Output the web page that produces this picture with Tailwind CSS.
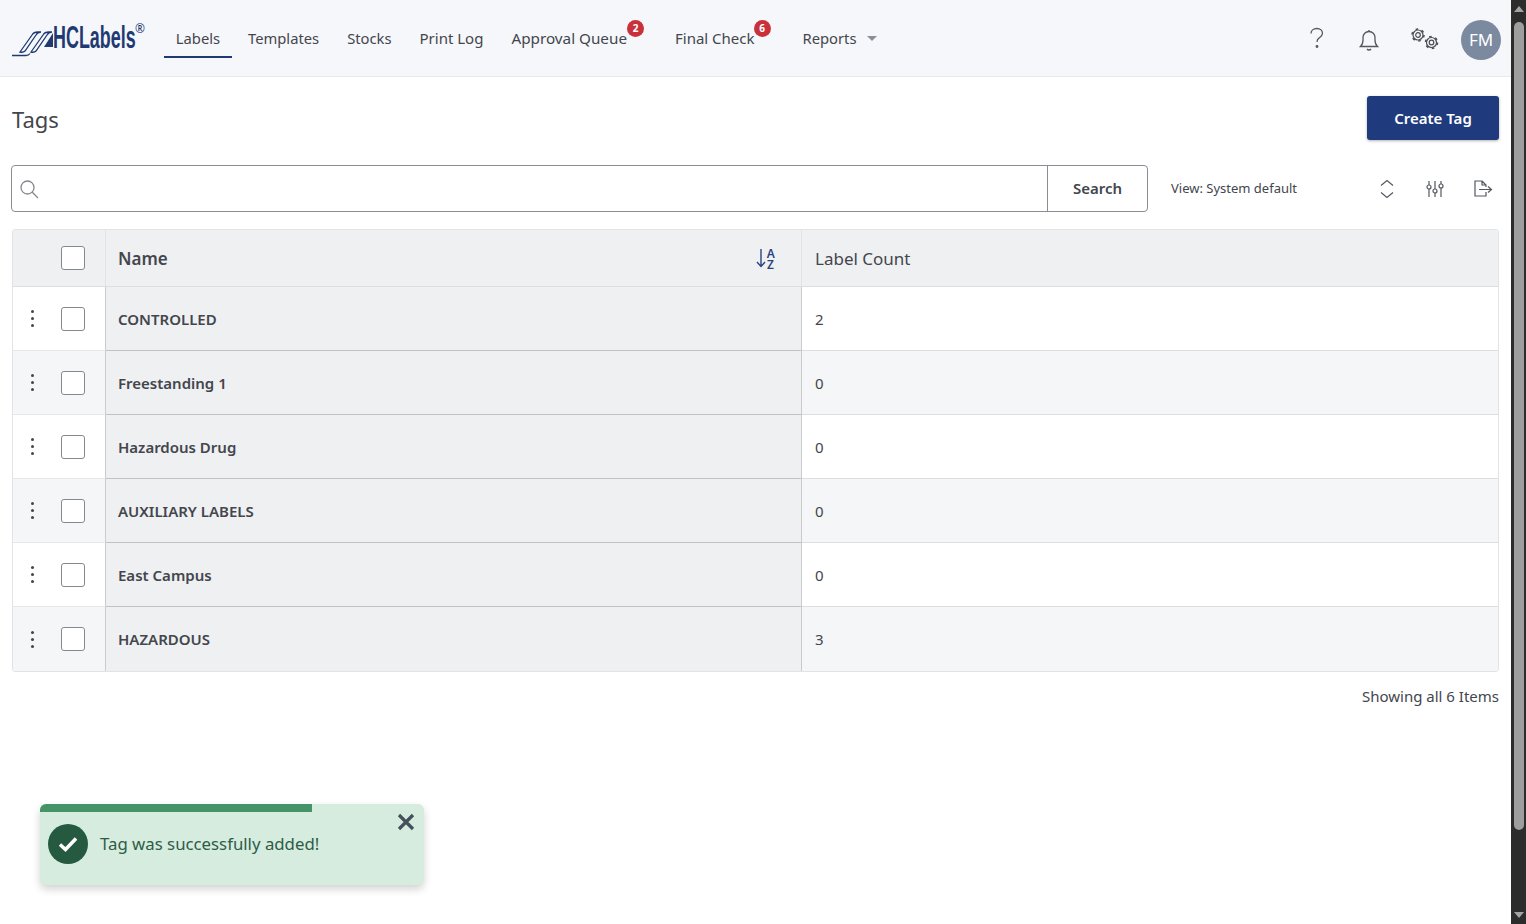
<!DOCTYPE html>
<html lang="en">
<head>
  <meta charset="UTF-8" />
  <meta name="viewport" content="width=device-width, initial-scale=1" />
  <title>Tags</title>
  <script src="https://cdn.jsdelivr.net/npm/@tailwindcss/browser@4"></script>
</head>
<body class="bg-white font-['Noto_Sans',sans-serif] text-[#43464d] h-screen overflow-hidden flex">
  <div class="flex-1 min-w-0 relative">
    <!-- top nav -->
    <header class="h-[77px] bg-[#f6f7fa] border-b border-[#e8e9ec] flex items-center pl-3 pr-[10px]">
      <a class="w-[152px] h-[40px] flex items-center shrink-0 text-[#1f3a73]">
        <svg width="41" height="28" viewBox="0 0 41 28" fill="none" stroke="#1f3a73" stroke-width="1.300" class="shrink-0 mt-[9px]">
          <path d="M0 26.500H14c2 0 3-.5 4-2" />
          <path d="M8 23 20 6c1-2 3-3 6-3h3c-2 0-4 1-5 3L13 22c-1 1-3 1.500-5 1z" />
          <path d="M19 23 31 6c1-2 3-3 6-3h3c-2 0-4 1-5 3L24 22c-1 1-3 1.500-5 1z" />
          <path d="M32 18 41 4v14z" fill="#1f3a73" stroke="none" />
        </svg>
        <span class="font-['Liberation_Sans',sans-serif] font-bold text-[32px] leading-none scale-x-[0.56] origin-left whitespace-nowrap w-[82px] inline-block mt-[-3px]">HCLabels</span>
        <span class="text-[12px] leading-none -mt-[19px] ml-0">®</span>
      </a>
      <nav class="flex items-center h-full text-[14.75px]">
        <a class="h-[40px] pt-[2px] w-[68px] flex items-center justify-center border-b-2 border-[#1f3a73]">Labels</a>
        <a class="ml-4">Templates</a>
        <a class="ml-7">Stocks</a>
        <a class="ml-7 text-[15px]">Print Log</a>
        <a class="ml-7 relative text-[15.25px]">Approval Queue
          <span class="absolute -right-[17px] -top-[7px] w-[17px] h-[17px] rounded-full bg-[#c8313a] text-white text-[10px] font-bold flex items-center justify-center">2</span>
        </a>
        <a class="ml-12 relative text-[15px]">Final Check
          <span class="absolute -right-[16px] -top-[7px] w-[17px] h-[17px] rounded-full bg-[#c8313a] text-white text-[10px] font-bold flex items-center justify-center">6</span>
        </a>
        <a class="ml-12 flex items-center">Reports
          <span class="ml-[10px] w-0 h-0 border-x-[5px] border-x-transparent border-t-[5px] border-t-[#8b8f96]"></span>
        </a>
      </nav>
      <div class="ml-auto flex items-center">
        <svg width="20" height="24" viewBox="0 0 20 24" fill="none" stroke="#55585f" stroke-width="1.300" class="mr-[32px] mb-[1px]">
          <path d="M4 7.500C4 4.500 6.500 2.500 9.800 2.500 13 2.500 15.500 4.500 15.500 7.300c0 2.400-1.600 3.400-3.300 4.600-1.500 1-2.200 2-2.200 4.100" />
          <circle cx="10" cy="20.500" r=".8" fill="#55585f" />
        </svg>
        <svg width="20" height="22" viewBox="0 0 20 22" fill="none" stroke="#55585f" stroke-width="1.300" class="mr-[32px] mt-[4px]">
          <path d="M1.500 17.500c1.800-1.600 2.500-3.500 2.500-6.500V8.500C4 5 6.600 2.500 10 2.500s6 2.500 6 6V11c0 3 .7 4.900 2.500 6.500z" />
          <path d="M10 1v1.500M8 20c.5.700 1.200 1 2 1s1.500-.3 2-1" />
        </svg>
        <svg width="28" height="22" viewBox="0 0 28 22" fill="none" stroke="#4a4d54" class="mr-[22px] mt-[1px]">
          <g stroke-width="1.200">
            <circle cx="7" cy="7" r="5" />
            <circle cx="7" cy="7" r="2.300" />
            <circle cx="20.500" cy="14.500" r="5" />
            <circle cx="20.500" cy="14.500" r="2.300" />
          </g>
          <g stroke-width="1.500" stroke-dasharray="2.600 3.680">
            <circle cx="7" cy="7" r="6" />
            <circle cx="20.500" cy="14.500" r="6" />
          </g>
        </svg>
        <div class="w-10 h-10 mt-1 rounded-full bg-[#7c8aa0] text-white text-[17px] flex items-center justify-center">FM</div>
      </div>
    </header>

    <main class="pl-3 pr-3">
      <div class="flex items-start justify-between pt-[19px] h-[88px]">
        <h1 class="text-[22px] leading-none mt-[12px]">Tags</h1>
        <button class="w-[132px] h-[44px] rounded-[3px] bg-[#1f3a7d] text-white text-[15px] font-semibold shadow-[0_1px_3px_rgba(0,0,0,0.3)]">Create Tag</button>
      </div>

      <div class="flex items-center h-[47px]">
        <div class="w-[1137px] h-[47px] -ml-[1px] flex items-center border border-[#8a8d93] rounded-[4px] bg-white">
          <svg width="20" height="20" viewBox="0 0 20 20" fill="none" stroke="#85888e" stroke-width="1.300" class="ml-[7px] shrink-0">
            <circle cx="8.500" cy="8.500" r="6.500" />
            <path d="M13.300 13.300 19 19" />
          </svg>
          <div class="ml-auto w-[100px] h-full border-l border-[#8a8d93] flex items-center justify-center text-[15px] font-semibold">Search</div>
        </div>
        <span class="ml-[23px] pt-[1px] text-[13px] w-[200px]">View: System default</span>
        <svg width="14" height="20" viewBox="0 0 14 20" fill="none" stroke="#55585f" stroke-width="1.200" class="ml-[9px]">
          <path d="M1 6.500l6-5 6 5M1 13.500l6 5 6-5" />
        </svg>
        <svg width="18" height="18" viewBox="0 0 18 18" fill="none" stroke="#55585f" stroke-width="1.200" class="ml-[32px]">
          <path d="M3 1v4M3 9v8M9 1v8M9 13v4M15 1v3M15 8v9" />
          <circle cx="3" cy="7" r="2" />
          <circle cx="9" cy="11" r="2" />
          <circle cx="15" cy="6" r="2" />
        </svg>
        <svg width="20" height="18" viewBox="0 0 20 18" fill="none" stroke="#55585f" stroke-width="1.200" class="ml-[29px]">
          <path d="M9 1H2v15h11v-4M9 1l4 4v2M9 1v4h4" />
          <path d="M6 9.500h12.500M15 6.500l3.500 3-3.500 3" />
        </svg>
      </div>

      <!-- tags table -->
      <div class="mt-[17px] border border-[#e1e3e6] rounded-[3px] w-[1487px] overflow-hidden text-[15px]">
        <div class="flex h-[57px] bg-[#eff0f2] border-b border-[#dcdee1]">
          <div class="w-[93px] shrink-0 border-r border-[#e1e3e6] flex items-center pl-[48px]">
            <span class="w-6 h-6 rounded-[3px] border border-[#85888e] bg-white"></span>
          </div>
          <div class="w-[696px] shrink-0 border-r border-[#e1e3e6] flex items-center justify-between pl-3 pr-[25px]">
            <span class="text-[17px] font-semibold pt-[1px]">Name</span>
            <span class="flex items-center text-[#2b4480]">
              <svg width="10" height="20" viewBox="0 0 10 20" fill="none" stroke="#2b4480" stroke-width="1.400">
                <path d="M5 1v17M1 14l4 4.500L9 14" />
              </svg>
              <span class="text-[12px] leading-none font-semibold -ml-[2px] [writing-mode:vertical-rl] [text-orientation:upright] tracking-[-6.500px] h-[18px] -translate-y-[4px]">AZ</span>
            </span>
          </div>
          <div class="pl-[13px] pt-[1px] flex items-center text-[17px]">Label Count</div>
        </div>

        <div class="flex h-[64px] bg-white">
          <div class="w-[93px] shrink-0 border-r border-r-[#c9cbce] border-b border-b-[#e6e7ea] flex items-center pl-[18px]">
            <span class="flex flex-col gap-[4px] w-[3px]"><i class="w-[3px] h-[3px] rounded-full bg-[#43464d]"></i><i class="w-[3px] h-[3px] rounded-full bg-[#43464d]"></i><i class="w-[3px] h-[3px] rounded-full bg-[#43464d]"></i></span>
            <span class="ml-[27px] w-6 h-6 rounded-[3px] border border-[#85888e] bg-white"></span>
          </div>
          <div class="w-[696px] shrink-0 bg-[#eff0f2] border-r border-r-[#c9cbce] border-b border-b-[#bfc1c4] flex items-center pl-3 pt-[1px] font-semibold">CONTROLLED</div>
          <div class="flex-1 border-b border-[#dcdee1] pl-[13px] pt-[1px] flex items-center">2</div>
        </div>
        <div class="flex h-[64px] bg-[#f5f6f8]">
          <div class="w-[93px] shrink-0 border-r border-r-[#c9cbce] border-b border-b-[#e6e7ea] flex items-center pl-[18px]">
            <span class="flex flex-col gap-[4px] w-[3px]"><i class="w-[3px] h-[3px] rounded-full bg-[#43464d]"></i><i class="w-[3px] h-[3px] rounded-full bg-[#43464d]"></i><i class="w-[3px] h-[3px] rounded-full bg-[#43464d]"></i></span>
            <span class="ml-[27px] w-6 h-6 rounded-[3px] border border-[#85888e] bg-white"></span>
          </div>
          <div class="w-[696px] shrink-0 bg-[#eff0f2] border-r border-r-[#c9cbce] border-b border-b-[#bfc1c4] flex items-center pl-3 pt-[1px] font-semibold">Freestanding 1</div>
          <div class="flex-1 border-b border-[#dcdee1] pl-[13px] pt-[1px] flex items-center">0</div>
        </div>
        <div class="flex h-[64px] bg-white">
          <div class="w-[93px] shrink-0 border-r border-r-[#c9cbce] border-b border-b-[#e6e7ea] flex items-center pl-[18px]">
            <span class="flex flex-col gap-[4px] w-[3px]"><i class="w-[3px] h-[3px] rounded-full bg-[#43464d]"></i><i class="w-[3px] h-[3px] rounded-full bg-[#43464d]"></i><i class="w-[3px] h-[3px] rounded-full bg-[#43464d]"></i></span>
            <span class="ml-[27px] w-6 h-6 rounded-[3px] border border-[#85888e] bg-white"></span>
          </div>
          <div class="w-[696px] shrink-0 bg-[#eff0f2] border-r border-r-[#c9cbce] border-b border-b-[#bfc1c4] flex items-center pl-3 pt-[1px] font-semibold">Hazardous Drug</div>
          <div class="flex-1 border-b border-[#dcdee1] pl-[13px] pt-[1px] flex items-center">0</div>
        </div>
        <div class="flex h-[64px] bg-[#f5f6f8]">
          <div class="w-[93px] shrink-0 border-r border-r-[#c9cbce] border-b border-b-[#e6e7ea] flex items-center pl-[18px]">
            <span class="flex flex-col gap-[4px] w-[3px]"><i class="w-[3px] h-[3px] rounded-full bg-[#43464d]"></i><i class="w-[3px] h-[3px] rounded-full bg-[#43464d]"></i><i class="w-[3px] h-[3px] rounded-full bg-[#43464d]"></i></span>
            <span class="ml-[27px] w-6 h-6 rounded-[3px] border border-[#85888e] bg-white"></span>
          </div>
          <div class="w-[696px] shrink-0 bg-[#eff0f2] border-r border-r-[#c9cbce] border-b border-b-[#bfc1c4] flex items-center pl-3 pt-[1px] font-semibold">AUXILIARY LABELS</div>
          <div class="flex-1 border-b border-[#dcdee1] pl-[13px] pt-[1px] flex items-center">0</div>
        </div>
        <div class="flex h-[64px] bg-white">
          <div class="w-[93px] shrink-0 border-r border-r-[#c9cbce] border-b border-b-[#e6e7ea] flex items-center pl-[18px]">
            <span class="flex flex-col gap-[4px] w-[3px]"><i class="w-[3px] h-[3px] rounded-full bg-[#43464d]"></i><i class="w-[3px] h-[3px] rounded-full bg-[#43464d]"></i><i class="w-[3px] h-[3px] rounded-full bg-[#43464d]"></i></span>
            <span class="ml-[27px] w-6 h-6 rounded-[3px] border border-[#85888e] bg-white"></span>
          </div>
          <div class="w-[696px] shrink-0 bg-[#eff0f2] border-r border-r-[#c9cbce] border-b border-b-[#bfc1c4] flex items-center pl-3 pt-[1px] font-semibold">East Campus</div>
          <div class="flex-1 border-b border-[#dcdee1] pl-[13px] pt-[1px] flex items-center">0</div>
        </div>
        <div class="flex h-[64px] bg-[#f5f6f8]">
          <div class="w-[93px] shrink-0 border-r border-r-[#c9cbce] flex items-center pl-[18px]">
            <span class="flex flex-col gap-[4px] w-[3px]"><i class="w-[3px] h-[3px] rounded-full bg-[#43464d]"></i><i class="w-[3px] h-[3px] rounded-full bg-[#43464d]"></i><i class="w-[3px] h-[3px] rounded-full bg-[#43464d]"></i></span>
            <span class="ml-[27px] w-6 h-6 rounded-[3px] border border-[#85888e] bg-white"></span>
          </div>
          <div class="w-[696px] shrink-0 bg-[#eff0f2] border-r border-r-[#c9cbce] flex items-center pl-3 font-semibold">HAZARDOUS</div>
          <div class="flex-1 pl-[13px] flex items-center">3</div>
        </div>
      </div>

      <p class="text-right text-[15px] mt-[13px]">Showing all 6 Items</p>
    </main>

    <!-- toast -->
    <div class="absolute left-10 top-[804px] w-[384px] h-[81px] rounded-[6px] bg-[#d6ecdf] shadow-[0_4px_8px_rgba(0,0,0,0.18)] overflow-hidden text-[#2d5c46]">
      <div class="h-2 w-[272px] bg-[#459467]"></div>
      <div class="flex items-center pl-2 mt-[12px]">
        <span class="w-10 h-10 rounded-full bg-[#255a41] flex items-center justify-center">
          <svg width="20" height="16" viewBox="0 0 20 16" fill="none" stroke="#fff" stroke-width="3.500">
            <path d="M2 8.500l5.500 5L18 2.500" />
          </svg>
        </span>
        <span class="ml-3 text-[16.8px]">Tag was successfully added!</span>
      </div>
      <svg width="18" height="18" viewBox="0 0 18 18" fill="none" stroke="#44505a" stroke-width="3.200" class="absolute right-[9px] top-[9px]">
        <path d="M2 2l14 14M16 2 2 16" />
      </svg>
    </div>
  </div>

  <!-- browser scrollbar -->
  <div class="w-[15px] shrink-0 bg-[#2c2c2c] flex flex-col items-center">
    <span class="mt-[6px] w-0 h-0 border-x-[5px] border-x-transparent border-b-[6px] border-b-[#a3a3a3]"></span>
    <span class="mt-[10px] w-[10px] h-[808px] rounded-[5px] bg-[#9e9e9e]"></span>
    <span class="mt-auto mb-[6px] w-0 h-0 border-x-[5px] border-x-transparent border-t-[6px] border-t-[#a3a3a3]"></span>
  </div>
</body>
</html>
